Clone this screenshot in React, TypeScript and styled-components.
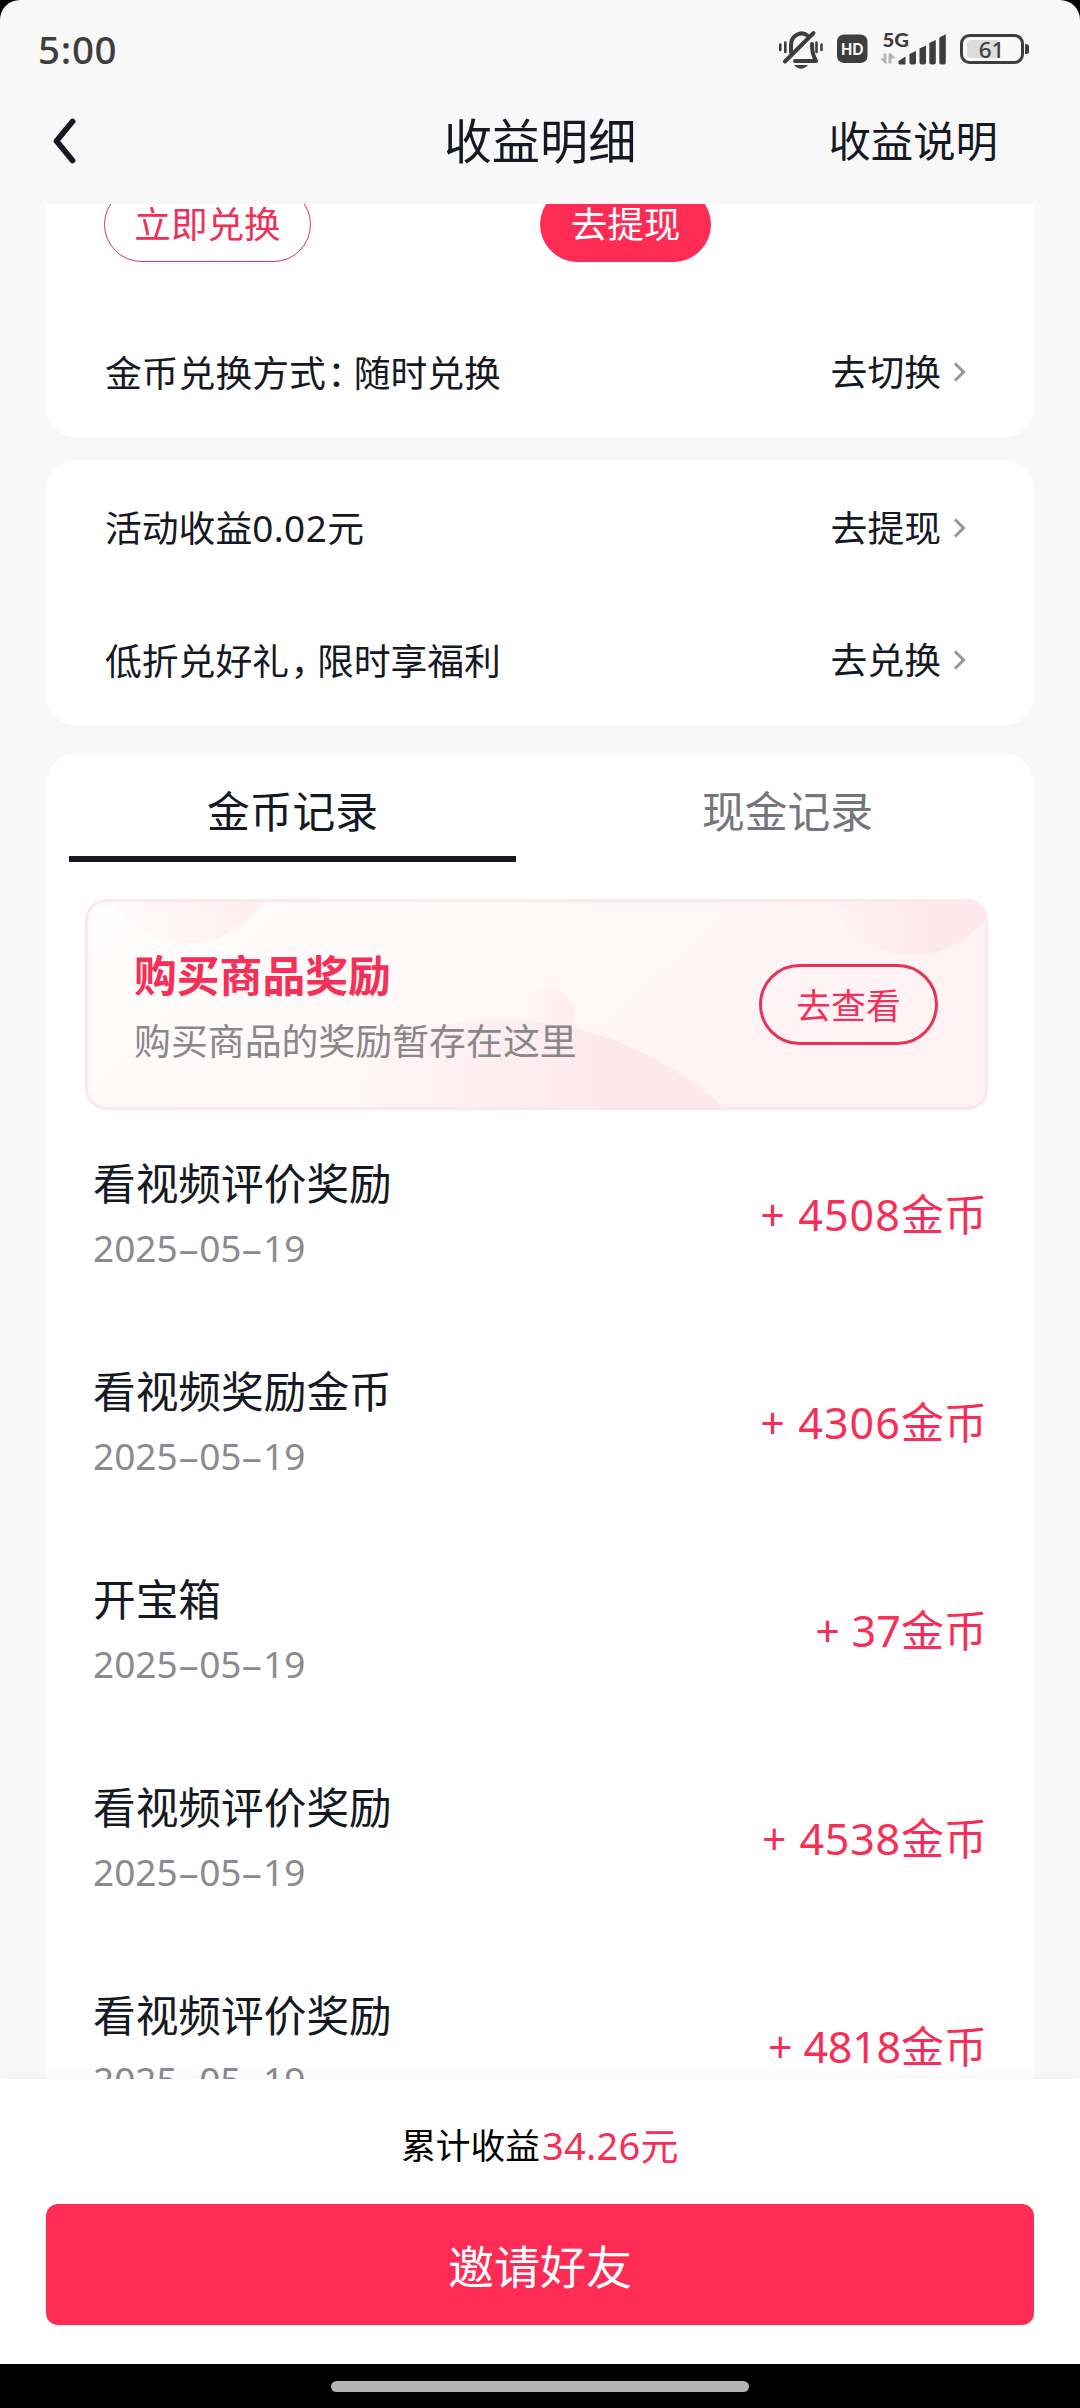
import React from "react";
import styled, { createGlobalStyle } from "styled-components";

const RED = "#fe2c55";
const RED_TEXT = "#f52f57";
const INK = "#161823";

const Global = createGlobalStyle`
  html, body { margin: 0; padding: 0; background: #000; }
  * { box-sizing: border-box; }
  button { border: 0; margin: 0; padding: 0; background: none; font: inherit; color: inherit; }
`;

const Phone = styled.div`
  width: 1080px;
  height: 2408px;
  display: flex;
  flex-direction: column;
  overflow: hidden;
  background: #000;
  color: ${INK};
  font-family: "Noto Sans", "Noto Sans CJK SC", sans-serif;
  line-height: 1;
  white-space: nowrap;
`;

const Screen = styled.div`
  flex: 0 0 2364px;
  display: flex;
  flex-direction: column;
  background: #f8f8f8;
  border-radius: 20px 20px 0 0;
  overflow: hidden;
`;

const StatusBar = styled.div`
  flex: 0 0 100px;
  display: flex;
  justify-content: space-between;
  padding: 26px 50px 0 38px;
  color: #3e3e3e;
`;

const Clock = styled.span`
  height: 48px;
  line-height: 47px;
  font-size: 38.5px;
  font-weight: 500;
  letter-spacing: 0.7px;
`;

const StatusIcons = styled.svg`
  display: block;
  width: 252px;
  height: 48px;
`;

const Header = styled.header`
  flex: 0 0 104px;
  display: grid;
  grid-template-columns: 390px 300px 390px;
  align-items: start;
`;

const Back = styled.button`
  display: block;
  width: 24px;
  height: 46px;
  margin: 18px 0 0 53px;
`;

const Title = styled.h1`
  margin: 0;
  height: 80px;
  line-height: 81px;
  text-align: center;
  font-size: 48.2px;
  font-weight: 400;
`;

const HelpLink = styled.a`
  justify-self: end;
  padding-right: 82px;
  height: 80px;
  line-height: 81px;
  font-size: 42.4px;
`;

const Feed = styled.main`
  flex: 0 0 1875px;
  overflow: hidden;
  display: flex;
  flex-direction: column;
  padding: 0 46px;
`;

const Card = styled.section<{ $h: number; $gap: number; $open?: boolean }>`
  flex: 0 0 ${(p) => p.$h}px;
  margin-bottom: ${(p) => p.$gap}px;
  background: #fff;
  border-radius: ${(p) => (p.$open ? "0 0 30px 30px" : "30px")};
  overflow: hidden;
`;

const Pills = styled.div`
  display: flex;
  gap: 229px;
  margin-top: -17px;
  padding-left: 58px;
  height: 119px;
`;

const Pill = styled.button<{ $solid?: boolean }>`
  height: 75px;
  width: ${(p) => (p.$solid ? 171 : 207)}px;
  border-radius: 38px;
  border: 1px solid ${(p) => (p.$solid ? RED : "#e0305a")};
  background: ${(p) => (p.$solid ? RED : "#fff")};
  color: ${(p) => (p.$solid ? "#fff" : "#ee3058")};
  font-size: 36.6px;
  line-height: 71px;
`;

const LinkRow = styled.div<{ $h: number }>`
  display: flex;
  align-items: center;
  height: ${(p) => p.$h}px;
  padding: 1px 67px 0 59px;
  font-size: 36.8px;
`;

const RowLabel = styled.span`
  flex: 1;
`;

const Punct = styled.span`
  font-family: "Noto Sans CJK SC", sans-serif;
  font-feature-settings: "halt" 1;
  padding: 0 8px 0 1.5px;
`;

const Numeral = styled.span`
  letter-spacing: 0.5px;
`;

const Go = styled.a`
  display: flex;
  align-items: center;
  gap: 12px;
`;

const Tabs = styled.div`
  display: grid;
  grid-template-columns: 447px 447px;
  gap: 48px;
  padding: 0 23px;
  height: 108px;
`;

const Tab = styled.button<{ $on?: boolean }>`
  height: 108px;
  padding-top: 5px;
  font-size: 42.8px;
  line-height: 105px;
  color: ${(p) => (p.$on ? INK : "#75767b")};
  border-bottom: 6px solid ${(p) => (p.$on ? INK : "transparent")};
`;

const Banner = styled.div`
  position: relative;
  display: flex;
  align-items: center;
  justify-content: space-between;
  width: 903px;
  height: 211px;
  margin: 37px 0 0 39px;
  padding: 0 50px 0 49px;
  border-radius: 21px;
  overflow: hidden;
`;

const BannerArt = styled.svg`
  position: absolute;
  inset: 0;
  width: 903px;
  height: 211px;
`;

const BannerCopy = styled.div`
  position: relative;
  display: flex;
  flex-direction: column;
  gap: 20px;
  padding-top: 3px;
`;

const BannerTitle = styled.strong`
  font-size: 42.8px;
  line-height: 50px;
  font-weight: 700;
  color: ${RED_TEXT};
`;

const BannerNote = styled.span`
  font-size: 36.9px;
  line-height: 40px;
  color: #8a878b;
`;

const BannerButton = styled.button`
  position: relative;
  width: 179px;
  height: 81px;
  border: 3px solid #e8325a;
  border-radius: 41px;
  color: ${RED_TEXT};
  font-size: 34.8px;
  line-height: 77px;
`;

const List = styled.ul`
  list-style: none;
  margin: 0;
  padding: 0;
`;

const Entry = styled.li`
  display: flex;
  align-items: center;
  justify-content: space-between;
  height: 208px;
  padding: 2px 47px 0 47px;
`;

const EntryInfo = styled.div`
  display: flex;
  flex-direction: column;
  gap: 18px;
`;

const EntryName = styled.span`
  font-size: 42.7px;
  line-height: 48px;
`;

const EntryDate = styled.time`
  display: flex;
  font-size: 37px;
  line-height: 44px;
  color: #8b8b8d;
`;

const Dash = styled.span`
  width: 21.5px;
  text-align: center;
  transform: scaleX(1.9);
`;

const Amount = styled.span`
  font-size: 43px;
  line-height: 48px;
  color: ${RED_TEXT};
`;

const Digits = styled.span<{ $track: number }>`
  letter-spacing: ${(p) => p.$track}px;
  font-weight: 450;
`;

const Footer = styled.footer`
  position: relative;
  flex: 0 0 285px;
  display: flex;
  flex-direction: column;
  align-items: center;
  background: #fff;
  box-shadow: 0 0 14px rgba(0, 0, 0, 0.05);
`;

const Total = styled.div`
  display: flex;
  align-items: center;
  height: 125px;
  padding-top: 10px;
  gap: 2px;
  color: #000;
  font-size: 34.7px;
`;

const TotalValue = styled.span`
  margin-top: -3px;
  color: ${RED_TEXT};
  font-size: 38px;
  letter-spacing: 0.3px;
`;

const Invite = styled.button`
  width: 988px;
  height: 121px;
  border-radius: 12px;
  background: ${RED};
  color: #fff;
  font-size: 46px;
  line-height: 124px;
`;

const NavBar = styled.div`
  flex: 1;
  display: flex;
  justify-content: center;
  padding-top: 17px;
  background: #000;
`;

const Handle = styled.div`
  width: 418px;
  height: 11px;
  border-radius: 6px;
  background: #b3b3b3;
`;

const StatusGlyphs = () => (
  <StatusIcons viewBox="778 26 252 48">
    <g fill="none" stroke="#3e3e3e" strokeLinecap="round" strokeLinejoin="round">
      <path strokeWidth="4" d="M791 52V45A10.500 11.500 0 0 1 808 36M812 44C812 52 813 55 816 61H795M813.500 33L785 61.500" />
      <path strokeWidth="2.600" d="M780.300 44.500V50M785.300 42.500V52M821.500 44.500V50M816.500 42.500V52" />
    </g>
    <path fill="#3e3e3e" d="M794 65H808Q801 72.500 794 65Z" />
    <rect x="837" y="34.500" width="30.500" height="28.500" rx="7" fill="#3e3e3e" />
    <text x="841" y="55" fontFamily="Lato, sans-serif" fontWeight="900" fontSize="16.300" textLength="22.500" lengthAdjust="spacingAndGlyphs" fill="#f8f8f8">HD</text>
    <text x="882.500" y="46.700" fontFamily="Lato, sans-serif" fontWeight="900" fontSize="19" fill="#3e3e3e" textLength="26.500" lengthAdjust="spacingAndGlyphs">5G</text>
    <g fill="#b4b4b4">
      <path d="M883.500 53.500H886.500V63.500Q885 64 884 62.500L880 58.500H883.500Z" />
      <path d="M888.500 63.500H891.500V58.500H895.500L891 53.500Q889.500 53 888.500 54Z" />
    </g>
    <g fill="#3e3e3e">
      <path d="M898.500 61L905.500 56.500V64.500H900Q898.500 64.500 898.500 63Z" />
      <path d="M909.500 54L916 51V62.500Q916 64.500 914 64.500H911.500Q909.500 64.500 909.500 62.500Z" />
      <path d="M919.500 48.500L926 45.500V62.500Q926 64.500 924 64.500H921.500Q919.500 64.500 919.500 62.500Z" />
      <path d="M929.300 43L935.800 40V62.500Q935.800 64.500 933.800 64.500H931.300Q929.300 64.500 929.300 62.500Z" />
      <path d="M939.300 37.500L945.800 34.300V62.500Q945.800 64.500 943.800 64.500H941.300Q939.300 64.500 939.300 62.500Z" />
    </g>
    <rect x="961.500" y="35.500" width="61" height="27" rx="8" fill="none" stroke="#3e3e3e" strokeWidth="3" />
    <path d="M971 40H997.500V58H971Q967 58 967 54V44Q967 40 971 40Z" fill="#dcdcdc" />
    <path d="M1025 44Q1029 44 1029 46V52Q1029 54 1025 54Z" fill="#3e3e3e" />
    <text x="991.500" y="57.500" fontFamily="Noto Sans, sans-serif" fontWeight="500" fontSize="22.500" textAnchor="middle" fill="#3e3e3e">61</text>
  </StatusIcons>
);

const Chevron = () => (
  <svg width="14" height="20" viewBox="0 0 14 20" fill="none" stroke="#97979a" strokeWidth="3">
    <path d="M2 1.500L10.500 10L2 18.500" />
  </svg>
);

const Link = ({ h, label, action }: { h: number; label: React.ReactNode; action: string }) => (
  <LinkRow $h={h}>
    <RowLabel>{label}</RowLabel>
    <Go>
      {action}
      <Chevron />
    </Go>
  </LinkRow>
);

const entries = [
  { name: "看视频评价奖励", amount: "4508", track: 1.1 },
  { name: "看视频奖励金币", amount: "4306", track: 1.1 },
  { name: "开宝箱", amount: "37", track: 0.2 },
  { name: "看视频评价奖励", amount: "4538", track: 0.8 },
  { name: "看视频评价奖励", amount: "4818", track: -0.2 },
];

export default function App() {
  return (
    <Phone>
      <Global />
      <Screen>
        <StatusBar>
          <Clock>5:00</Clock>
          <StatusGlyphs />
        </StatusBar>
        <Header>
          <Back>
            <svg width="24" height="46" viewBox="0 0 24 46" fill="none" stroke={INK} strokeWidth="5.800" strokeLinecap="round" strokeLinejoin="round">
              <path d="M19.500 3.500L3.500 23L19.500 42.500" />
            </svg>
          </Back>
          <Title>收益明细</Title>
          <HelpLink>收益说明</HelpLink>
        </Header>
        <Feed>
          <Card $h={233} $gap={23} $open>
            <Pills>
              <Pill>立即兑换</Pill>
              <Pill $solid>去提现</Pill>
            </Pills>
            <Link h={132} label={<>金币兑换方式<Punct>：</Punct>随时兑换</>} action="去切换" />
          </Card>
          <Card $h={265} $gap={29}>
            <Link h={135} label={<>活动收益<Numeral>0.02</Numeral>元</>} action="去提现" />
            <Link h={130} label={<>低折兑好礼<Punct>，</Punct>限时享福利</>} action="去兑换" />
          </Card>
          <Card $h={1500} $gap={0}>
            <Tabs>
              <Tab $on>金币记录</Tab>
              <Tab>现金记录</Tab>
            </Tabs>
            <Banner>
              <BannerArt viewBox="85 899 903 211">
                <defs>
                  <linearGradient id="base" x1="0" y1="0" x2="1" y2="0.250">
                    <stop offset="0" stopColor="#fffdfd" />
                    <stop offset="0.500" stopColor="#fff8f8" />
                    <stop offset="1" stopColor="#fff2f4" />
                  </linearGradient>
                  <linearGradient id="faint" x1="0" y1="0" x2="1" y2="0">
                    <stop offset="0" stopColor="#fee9ee" stopOpacity="0" />
                    <stop offset="1" stopColor="#fee9ee" stopOpacity="0.800" />
                  </linearGradient>
                  <linearGradient id="fade" x1="0" y1="0" x2="1" y2="0">
                    <stop offset="0" stopColor="#fde8ed" stopOpacity="0" />
                    <stop offset="0.600" stopColor="#fde8ed" stopOpacity="0.900" />
                    <stop offset="1" stopColor="#fde8ed" />
                  </linearGradient>
                  <linearGradient id="hill" gradientUnits="userSpaceOnUse" x1="330" y1="0" x2="620" y2="0">
                    <stop offset="0" stopColor="#fde8ed" stopOpacity="0" />
                    <stop offset="1" stopColor="#fde8ed" />
                  </linearGradient>
                </defs>
                <rect x="85" y="899" width="903" height="211" fill="url(#base)" />
                <circle cx="187" cy="853" r="90" fill="url(#faint)" />
                <circle cx="912" cy="862" r="93" fill="url(#fade)" />
                <circle cx="548" cy="1015" r="26" fill="url(#faint)" />
                <circle cx="500" cy="1348" r="328" fill="url(#hill)" />
                <rect x="86.500" y="900.500" width="900" height="208" rx="20" fill="none" stroke="#fde7ec" strokeWidth="3" />
              </BannerArt>
              <BannerCopy>
                <BannerTitle>购买商品奖励</BannerTitle>
                <BannerNote>购买商品的奖励暂存在这里</BannerNote>
              </BannerCopy>
              <BannerButton>去查看</BannerButton>
            </Banner>
            <List>
              {entries.map((e, i) => (
                <Entry key={i}>
                  <EntryInfo>
                    <EntryName>{e.name}</EntryName>
                    <EntryDate>
                      2025<Dash>-</Dash>05<Dash>-</Dash>19
                    </EntryDate>
                  </EntryInfo>
                  <Amount>
                    <Digits $track={e.track}>+ {e.amount}</Digits>金币
                  </Amount>
                </Entry>
              ))}
            </List>
          </Card>
        </Feed>
        <Footer>
          <Total>
            累计收益<TotalValue>34.26元</TotalValue>
          </Total>
          <Invite>邀请好友</Invite>
        </Footer>
      </Screen>
      <NavBar>
        <Handle />
      </NavBar>
    </Phone>
  );
}
